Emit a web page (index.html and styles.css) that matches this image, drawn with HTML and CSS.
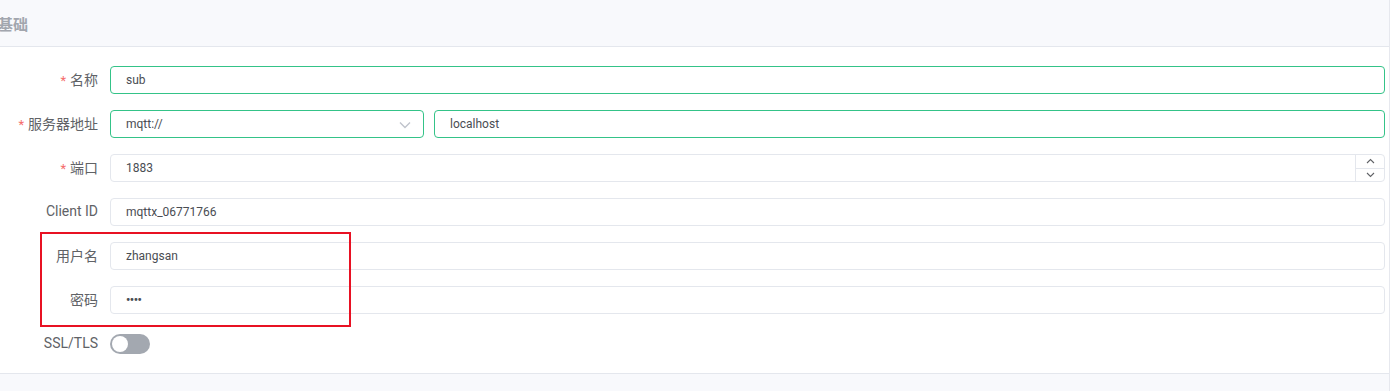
FILE: index.html
```html
<!DOCTYPE html>
<html lang="zh">
<head>
<meta charset="utf-8">
<link rel="stylesheet" href="styles.css">
</head>
<body>
<div class="card">
  <div class="card-header"><span class="title">基础</span></div>
  <div class="form">
    <div class="row">
      <label class="label"><span class="req">*</span>名称</label>
      <div class="field"><div class="input active">sub</div></div>
    </div>
    <div class="row">
      <label class="label"><span class="req">*</span>服务器地址</label>
      <div class="field split">
        <div class="input active select">mqtt://
          <svg class="chev" width="12" height="8" viewBox="0 0 12 8"><path d="M1 1.5 L6 6.5 L11 1.5" fill="none" stroke="#c0c4cc" stroke-width="1.4"/></svg>
        </div>
        <div class="input active grow">localhost</div>
      </div>
    </div>
    <div class="row">
      <label class="label"><span class="req">*</span>端口</label>
      <div class="field"><div class="input number">1883
        <div class="spin">
          <div class="spin-btn"><svg width="9" height="6" viewBox="0 0 9 6"><path d="M1 5 L4.5 1.5 L8 5" fill="none" stroke="#606266" stroke-width="1.1"/></svg></div>
          <div class="spin-btn bottom"><svg width="9" height="6" viewBox="0 0 9 6"><path d="M1 1 L4.5 4.5 L8 1" fill="none" stroke="#606266" stroke-width="1.1"/></svg></div>
        </div>
      </div></div>
    </div>
    <div class="row">
      <label class="label">Client ID</label>
      <div class="field"><div class="input">mqttx_06771766</div></div>
    </div>
    <div class="row">
      <label class="label">用户名</label>
      <div class="field"><div class="input">zhangsan</div></div>
    </div>
    <div class="row">
      <label class="label">密码</label>
      <div class="field"><div class="input pwd">••••</div></div>
    </div>
    <div class="row">
      <label class="label">SSL/TLS</label>
      <div class="field"><div class="switch"><span class="knob"></span></div></div>
    </div>
    <div class="highlight"></div>
  </div>
  <div class="card-footer"></div>
</div>
</body>
</html>
```
FILE: styles.css
```css
html, body {
  margin: 0;
  padding: 0;
  background: #ffffff;
}
body {
  width: 1390px;
  height: 391px;
  overflow: hidden;
  font-family: "Noto Sans", "Noto Sans CJK SC", sans-serif;
}
.card {
  border-right: 1px solid #e6e8ee;
  width: 1389px;
}
.card-header {
  height: 46px;
  background: #f8f9fc;
  border-bottom: 1px solid #e4e7ed;
  display: flex;
  align-items: center;
}
.title {
  margin-left: -2px;
  font-size: 15px;
  font-weight: 700;
  color: #a2a6ae;
}
.form {
  position: relative;
  padding: 19px 0 15px 0;
  display: flex;
  flex-direction: column;
  gap: 16px;
}
.row {
  display: flex;
  align-items: center;
  height: 28px;
}
.label {
  width: 98px;
  padding-right: 12px;
  box-sizing: content-box;
  text-align: right;
  font-family: Roboto, "Noto Sans CJK SC", sans-serif;
  font-size: 14px;
  color: #606266;
  white-space: nowrap;
  position: relative;
  top: -1px;
}
.req {
  color: #f56c6c;
  margin-right: 4px;
  font-size: 13px;
}
.field {
  width: 1275px;
  display: flex;
}
.split {
  gap: 10px;
}
.input {
  position: relative;
  box-sizing: border-box;
  height: 28px;
  width: 100%;
  border: 1px solid #e4e7ed;
  border-radius: 4px;
  padding: 0 15px;
  display: flex;
  align-items: center;
  font-family: Roboto, "Noto Sans", sans-serif;
  font-size: 12px;
  color: #4a4d53;
  background: #fff;
}
.input.active {
  border-color: #34c388;
}
.select {
  width: 314px;
  flex: none;
}
.grow {
  flex: 1;
  width: auto;
}
.chev {
  position: absolute;
  right: 12px;
  top: 10px;
}
.pwd {
  font-size: 12px;
  font-weight: 700;
  letter-spacing: -0.5px;
}
.spin {
  position: absolute;
  right: 0;
  top: 0;
  bottom: 0;
  width: 28px;
  border-left: 1px solid #e4e7ed;
  display: flex;
  flex-direction: column;
}
.spin-btn {
  flex: 1;
  display: flex;
  align-items: center;
  justify-content: center;
}
.spin-btn.bottom {
  border-top: 1px solid #e4e7ed;
}
.switch {
  width: 40px;
  height: 20px;
  border-radius: 10px;
  background: #a3a8b0;
  position: relative;
}
.knob {
  position: absolute;
  left: 2px;
  top: 2px;
  width: 16px;
  height: 16px;
  border-radius: 50%;
  background: #fff;
}
.highlight {
  position: absolute;
  left: 40px;
  top: 185px;
  width: 307px;
  height: 91px;
  border: 2px solid #e81123;
}
.card-footer {
  border-top: 1px solid #e4e7ed;
  background: #f8f9fc;
  height: 20px;
}
```
